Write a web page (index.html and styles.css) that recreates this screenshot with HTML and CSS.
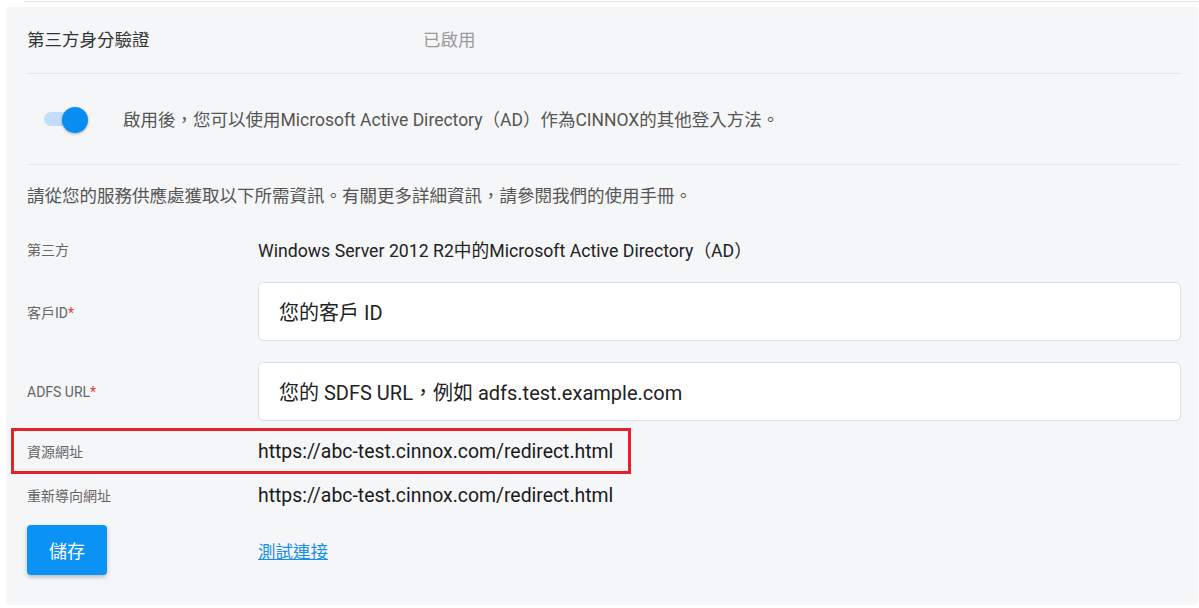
FILE: index.html
```html
<!DOCTYPE html>
<html lang="zh-Hant">
<head>
<meta charset="utf-8">
<title>第三方身分驗證</title>
<link rel="stylesheet" href="styles.css">
</head>
<body>
<div class="topline"></div>
<section class="panel">
  <header class="head">
    <span class="head-title">第三方身分驗證</span>
    <span class="head-status">已啟用</span>
  </header>
  <div class="toggle-row">
    <span class="switch"><span class="switch-track"></span><span class="switch-knob"></span></span>
    <span class="toggle-text">啟用後，您可以使用Microsoft Active Directory（AD）作為CINNOX的其他登入方法。</span>
  </div>
  <p class="info">請從您的服務供應處獲取以下所需資訊。有關更多詳細資訊，請參閱我們的使用手冊。</p>
  <div class="row row-first">
    <span class="label">第三方</span>
    <span class="value">Windows Server 2012 R2中的Microsoft Active Directory（AD）</span>
  </div>
  <div class="row row-input">
    <span class="label">客戶ID<span class="req">*</span></span>
    <div class="input">您的客戶 ID</div>
  </div>
  <div class="row row-input row-input2">
    <span class="label">ADFS URL<span class="req">*</span></span>
    <div class="input">您的 SDFS URL，例如 adfs.test.example.com</div>
  </div>
  <div class="row row-mark">
    <span class="label">資源網址</span>
    <span class="value value-url">https://abc-test.cinnox.com/redirect.html</span>
  </div>
  <div class="row row-redirect">
    <span class="label">重新導向網址</span>
    <span class="value value-url">https://abc-test.cinnox.com/redirect.html</span>
  </div>
  <div class="row row-actions">
    <div class="label"><button class="btn">儲存</button></div>
    <a class="link" href="#">測試連接</a>
  </div>
</section>
</body>
</html>
```
FILE: styles.css
```css
* { box-sizing: border-box; }
html, body { margin: 0; padding: 0; background: #fff; }
body {
  font-family: Roboto, "Noto Sans CJK TC", "Noto Sans", sans-serif;
  width: 1199px;
  height: 608px;
  overflow: hidden;
}
.topline {
  margin-left: 24px;
  margin-top: 1px;
  height: 1px;
  background: #e4e4e4;
}
.panel {
  margin: 5px 1px 0 6px;
  height: 598px;
  background: #f5f6f8;
  border-radius: 4px;
  padding: 0 17px 0 21px;
}
.head {
  height: 67px;
  display: flex;
  align-items: center;
  border-bottom: 1px solid #e3e5e8;
  padding-bottom: 3px;
}
.head-title {
  width: 396px;
  font-size: 17.5px;
  color: #333;
}
.head-status {
  font-size: 17.5px;
  color: #9a9a9a;
}
.toggle-row {
  height: 91px;
  display: flex;
  align-items: center;
  border-bottom: 1px solid #e3e5e8;
  padding-bottom: 1px;
}
.switch {
  position: relative;
  width: 46px;
  height: 26px;
  margin-left: 17px;
  margin-right: 33px;
}
.switch-track {
  position: absolute;
  left: 0;
  top: 6px;
  width: 40px;
  height: 14px;
  border-radius: 7px;
  background: #c3defa;
}
.switch-knob {
  position: absolute;
  left: 18px;
  top: 1px;
  width: 26px;
  height: 26px;
  border-radius: 50%;
  background: #0a8df2;
  box-shadow: 0 1px 3px rgba(0,0,0,0.3);
}
.toggle-text {
  font-size: 17.5px;
  color: #555;
}
.info {
  margin: 20px 0 0;
  font-size: 17.5px;
  line-height: 22px;
  color: #555;
}
.row {
  display: flex;
  align-items: center;
}
.label {
  width: 231px;
  flex: none;
  font-size: 14px;
  color: #666;
}
.req { color: #e53935; }
.value {
  font-size: 17.7px;
  color: #222;
}
.value-url {
  font-size: 19.4px;
  color: #1a1a1a;
}
.row-first { margin-top: 31px; height: 22px; }
.row-input { margin-top: 22px; }
.row-input2 { margin-top: 21px; }
.input {
  flex: 1;
  height: 59px;
  background: #fff;
  border: 1px solid #dcdfe3;
  border-radius: 5px;
  padding-left: 20px;
  display: flex;
  align-items: center;
  font-size: 20px;
  color: #222;
}
.row-mark {
  margin-top: 7px;
  margin-left: -16px;
  width: 620px;
  height: 46px;
  border: 3px solid #e8202a;
  padding: 1px 0 0 13px;
}
.row-mark .label { padding-top: 0; margin-top: -1px; }
.row-redirect { margin-top: 10px; height: 22px; }
.row-actions { margin-top: 19px; }
.btn {
  width: 80px;
  height: 50px;
  border: none;
  border-radius: 4px;
  background: #0a93f5;
  color: #fff;
  font-family: inherit;
  font-size: 18px;
  box-shadow: 0 2px 4px rgba(0,0,0,0.25);
}
.link {
  font-size: 17.5px;
  color: #1a8fe8;
  text-decoration: underline;
}
```
